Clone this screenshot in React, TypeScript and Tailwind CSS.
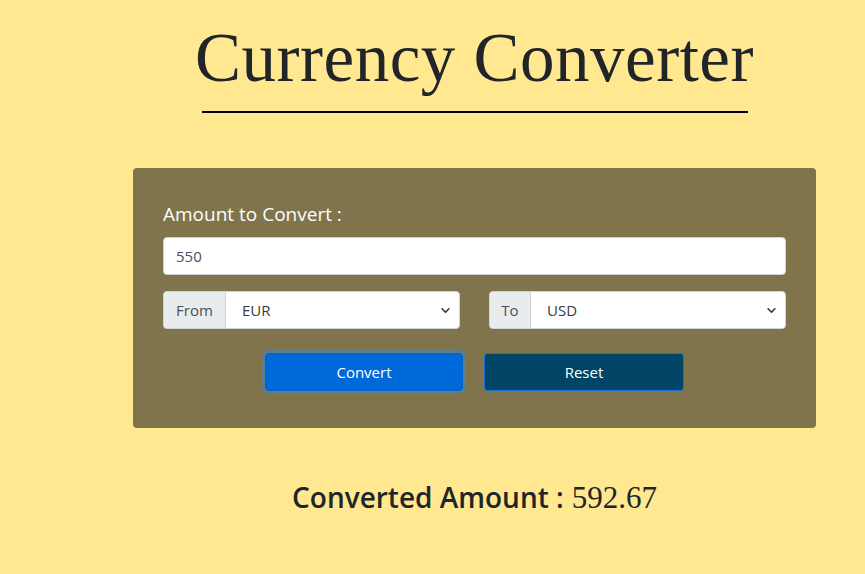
import React from "react";

function Chevron() {
  return (
    <svg width="11" height="11" viewBox="0 0 16 16" className="shrink-0">
      <path d="M3 5.5l5 5 5-5" fill="none" stroke="#343a40" strokeWidth="2.4" strokeLinecap="round" strokeLinejoin="round" />
    </svg>
  );
}

function SelectGroup({ label, value, addonW }: { label: string; value: string; addonW: string }) {
  return (
    <div className="flex h-[38px] w-[297px] rounded-[4px] border border-[#ced4da] overflow-hidden bg-white">
      <div className={`flex items-center justify-center bg-[#e9ecef] border-r border-[#ced4da] text-[15px] text-[#495057] ${addonW}`}>
        {label}
      </div>
      <div className="flex flex-1 items-center justify-between pl-[16px] pr-[8px] text-[15px] text-[#343a40]">
        <span>{value}</span>
        <Chevron />
      </div>
    </div>
  );
}

export default function App() {
  return (
    <div className="min-h-[574px] w-full bg-[#ffe88f]" style={{ fontFamily: '"Open Sans", "Noto Sans", sans-serif' }}>
      <div className="ml-[133px] w-[683px] flex flex-col items-center">
        <h1
          className="mt-[18px] text-[69px] leading-[80px] text-[#212529] tracking-[0.5px]"
          style={{ fontFamily: '"Liberation Serif", serif' }}
        >
          Currency Converter
        </h1>
        <div className="mt-[13px] h-[2px] w-[546px] bg-black" />
        <div className="mt-[55px] w-[683px] rounded-[4px] bg-[#7f744c] px-[30px] pt-[33px] pb-[37px]">
          <div className="text-[19px] leading-[26px] text-white">Amount to Convert :</div>
          <div className="mt-[10px] flex h-[38px] items-center rounded-[4px] border border-[#ced4da] bg-white px-[12px] text-[15px] text-[#495057]">
            550
          </div>
          <div className="mt-[16px] flex justify-between">
            <SelectGroup label="From" value="EUR" addonW="w-[62px]" />
            <SelectGroup label="To" value="USD" addonW="w-[41px]" />
          </div>
          <div className="mt-[24px] flex justify-center gap-[21px]">
            <button className="h-[38px] w-[198px] rounded-[4px] bg-[#0069d9] text-[15px] text-white shadow-[0_0_0_3px_rgba(38,143,255,0.35)] border border-[#0062cc]">
              Convert
            </button>
            <button className="h-[38px] w-[200px] rounded-[4px] bg-[#004466] text-[15px] text-white border border-[#1a6fe0]">
              Reset
            </button>
          </div>
        </div>
        <div className="mt-[47px] flex items-baseline gap-[8px] text-[28px] text-[#212529]">
          <span className="font-semibold">Converted Amount :</span>
          <span style={{ fontFamily: '"Liberation Serif", serif' }} className="text-[31px]">592.67</span>
        </div>
      </div>
    </div>
  );
}
